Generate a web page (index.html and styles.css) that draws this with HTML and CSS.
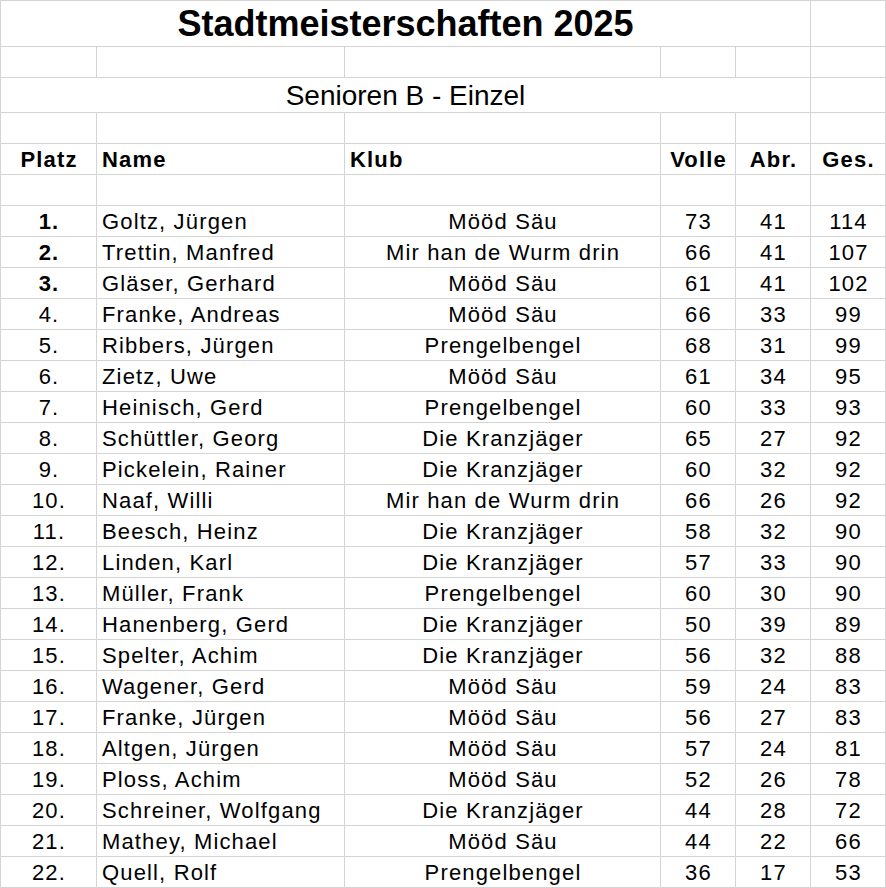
FILE: index.html
```html
<!DOCTYPE html>
<html lang="de">
<head>
<meta charset="utf-8">
<title>Stadtmeisterschaften 2025</title>
<link rel="stylesheet" href="styles.css">
</head>
<body>
<div class="sheet">
  <div class="c title span5">Stadtmeisterschaften 2025</div><div class="c"></div>
  <div class="c"></div><div class="c"></div><div class="c"></div><div class="c"></div><div class="c"></div><div class="c"></div>
  <div class="c sub span5">Senioren B - Einzel</div><div class="c"></div>
  <div class="c"></div><div class="c"></div><div class="c"></div><div class="c"></div><div class="c"></div><div class="c"></div>
  <div class="c m b">Platz</div><div class="c l b">Name</div><div class="c l b">Klub</div><div class="c m b">Volle</div><div class="c m b">Abr.</div><div class="c m b">Ges.</div>
  <div class="c"></div><div class="c"></div><div class="c"></div><div class="c"></div><div class="c"></div><div class="c"></div>

  <div class="c m b">1.</div><div class="c l">Goltz, Jürgen</div><div class="c m">Mööd Säu</div><div class="c m">73</div><div class="c m">41</div><div class="c m">114</div>
  <div class="c m b">2.</div><div class="c l">Trettin, Manfred</div><div class="c m">Mir han de Wurm drin</div><div class="c m">66</div><div class="c m">41</div><div class="c m">107</div>
  <div class="c m b">3.</div><div class="c l">Gläser, Gerhard</div><div class="c m">Mööd Säu</div><div class="c m">61</div><div class="c m">41</div><div class="c m">102</div>
  <div class="c m">4.</div><div class="c l">Franke, Andreas</div><div class="c m">Mööd Säu</div><div class="c m">66</div><div class="c m">33</div><div class="c m">99</div>
  <div class="c m">5.</div><div class="c l">Ribbers, Jürgen</div><div class="c m">Prengelbengel</div><div class="c m">68</div><div class="c m">31</div><div class="c m">99</div>
  <div class="c m">6.</div><div class="c l">Zietz, Uwe</div><div class="c m">Mööd Säu</div><div class="c m">61</div><div class="c m">34</div><div class="c m">95</div>
  <div class="c m">7.</div><div class="c l">Heinisch, Gerd</div><div class="c m">Prengelbengel</div><div class="c m">60</div><div class="c m">33</div><div class="c m">93</div>
  <div class="c m">8.</div><div class="c l">Schüttler, Georg</div><div class="c m">Die Kranzjäger</div><div class="c m">65</div><div class="c m">27</div><div class="c m">92</div>
  <div class="c m">9.</div><div class="c l">Pickelein, Rainer</div><div class="c m">Die Kranzjäger</div><div class="c m">60</div><div class="c m">32</div><div class="c m">92</div>
  <div class="c m">10.</div><div class="c l">Naaf, Willi</div><div class="c m">Mir han de Wurm drin</div><div class="c m">66</div><div class="c m">26</div><div class="c m">92</div>
  <div class="c m">11.</div><div class="c l">Beesch, Heinz</div><div class="c m">Die Kranzjäger</div><div class="c m">58</div><div class="c m">32</div><div class="c m">90</div>
  <div class="c m">12.</div><div class="c l">Linden, Karl</div><div class="c m">Die Kranzjäger</div><div class="c m">57</div><div class="c m">33</div><div class="c m">90</div>
  <div class="c m">13.</div><div class="c l">Müller, Frank</div><div class="c m">Prengelbengel</div><div class="c m">60</div><div class="c m">30</div><div class="c m">90</div>
  <div class="c m">14.</div><div class="c l">Hanenberg, Gerd</div><div class="c m">Die Kranzjäger</div><div class="c m">50</div><div class="c m">39</div><div class="c m">89</div>
  <div class="c m">15.</div><div class="c l">Spelter, Achim</div><div class="c m">Die Kranzjäger</div><div class="c m">56</div><div class="c m">32</div><div class="c m">88</div>
  <div class="c m">16.</div><div class="c l">Wagener, Gerd</div><div class="c m">Mööd Säu</div><div class="c m">59</div><div class="c m">24</div><div class="c m">83</div>
  <div class="c m">17.</div><div class="c l">Franke, Jürgen</div><div class="c m">Mööd Säu</div><div class="c m">56</div><div class="c m">27</div><div class="c m">83</div>
  <div class="c m">18.</div><div class="c l">Altgen, Jürgen</div><div class="c m">Mööd Säu</div><div class="c m">57</div><div class="c m">24</div><div class="c m">81</div>
  <div class="c m">19.</div><div class="c l">Ploss, Achim</div><div class="c m">Mööd Säu</div><div class="c m">52</div><div class="c m">26</div><div class="c m">78</div>
  <div class="c m">20.</div><div class="c l">Schreiner, Wolfgang</div><div class="c m">Die Kranzjäger</div><div class="c m">44</div><div class="c m">28</div><div class="c m">72</div>
  <div class="c m">21.</div><div class="c l">Mathey, Michael</div><div class="c m">Mööd Säu</div><div class="c m">44</div><div class="c m">22</div><div class="c m">66</div>
  <div class="c m">22.</div><div class="c l">Quell, Rolf</div><div class="c m">Prengelbengel</div><div class="c m">36</div><div class="c m">17</div><div class="c m">53</div>
</div>
</body>
</html>
```
FILE: styles.css
```css
html, body {
  margin: 0;
  padding: 0;
  background: #ffffff;
  overflow: hidden;
}

.sheet {
  display: grid;
  grid-template-columns: 95px 247px 315px 74px 74px 74px;
  grid-template-rows: 45px 30px 34px 30px 30px 30px repeat(22, 30px);
  gap: 1px;
  padding: 1px;
  width: max-content;
  background: #d4d4d4;
  font-family: "Liberation Sans", Arial, sans-serif;
  color: #000000;
}

.c {
  background: #ffffff;
  display: flex;
  align-items: flex-end;
  font-size: 22px;
  line-height: 24px;
  letter-spacing: 1.15px;
  padding-bottom: 2px;
  white-space: nowrap;
  overflow: hidden;
  box-sizing: border-box;
}

.l {
  justify-content: flex-start;
  padding-left: 5px;
}

.m {
  justify-content: center;
  padding-left: 1px;
}

.b {
  font-weight: bold;
}

.span5 {
  grid-column: 1 / 6;
  justify-content: center;
}

.title {
  font-size: 36px;
  line-height: 40px;
  font-weight: bold;
  letter-spacing: 0;
  padding-bottom: 2px;
}

.sub {
  font-size: 28px;
  line-height: 32px;
  letter-spacing: 0;
  padding-bottom: 0;
}
```
